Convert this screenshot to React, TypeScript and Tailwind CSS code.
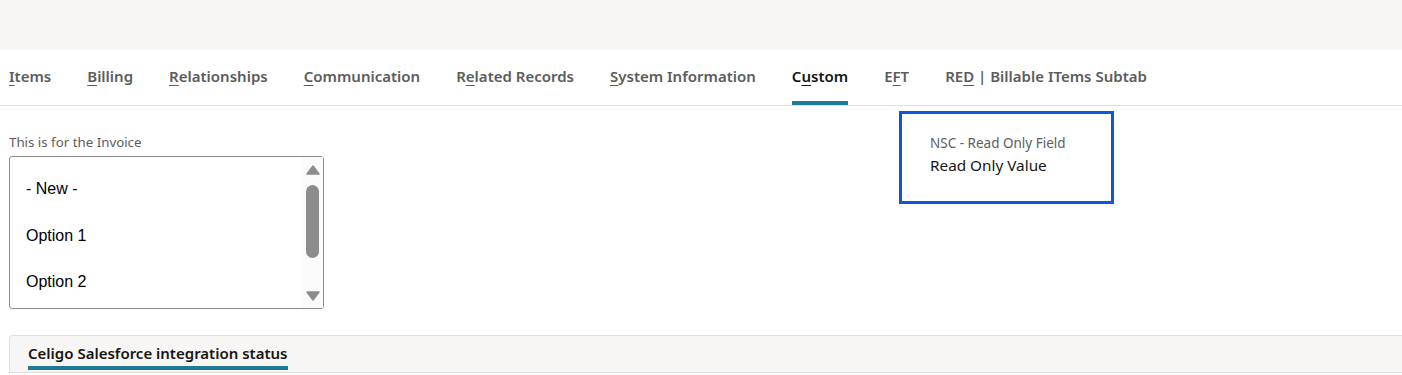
import React from "react";

const tabs: { pre: string; key: string; post: string; active?: boolean }[] = [
  { pre: "", key: "I", post: "tems" },
  { pre: "", key: "B", post: "illing" },
  { pre: "", key: "R", post: "elationships" },
  { pre: "", key: "C", post: "ommunication" },
  { pre: "R", key: "e", post: "lated Records" },
  { pre: "", key: "S", post: "ystem Information" },
  { pre: "C", key: "u", post: "stom", active: true },
  { pre: "E", key: "F", post: "T" },
  { pre: "RE", key: "D", post: " | Billable ITems Subtab" },
];

const font = { fontFamily: '"Noto Sans", Lato, sans-serif' };

function Listbox() {
  return (
    <div className="flex h-[153px] w-[315px] rounded-[3px] border border-[#8c8c8c] bg-white">
      <div className="flex flex-1 flex-col pl-4 pt-[20px] text-[16px] text-black [font-family:'Liberation_Sans',Arial,sans-serif]">
        <div className="h-[47px]">- New -</div>
        <div className="h-[46px]">Option 1</div>
        <div>Option 2</div>
      </div>
      <div className="flex w-[21px] flex-col items-center bg-[#fafafa] py-[6px]">
        <svg width="14" height="10" viewBox="0 0 14 10" className="mt-[2px]">
          <path d="M7 1 L13 9 L1 9 Z" fill="#8c8c8c" strokeLinejoin="round" stroke="#8c8c8c" strokeWidth="1.5" />
        </svg>
        <div className="mt-[10px] h-[73px] w-[13px] rounded-full bg-[#8c8c8c]" />
        <div className="flex-1" />
        <svg width="14" height="10" viewBox="0 0 14 10" className="mb-[1px]">
          <path d="M1 1 L13 1 L7 9 Z" fill="#8c8c8c" strokeLinejoin="round" stroke="#8c8c8c" strokeWidth="1.5" />
        </svg>
      </div>
    </div>
  );
}

export default function App() {
  return (
    <div className="h-[375px] w-[1402px] overflow-hidden bg-white" style={font}>
      <div className="h-[50px] bg-[#f7f6f4]" />

      <nav className="flex h-[56px] gap-[36px] border-b border-[#e0e0e0] pl-[9px]">
        {tabs.map((t) => (
          <div
            key={t.pre + t.key + t.post}
            className={`flex items-center border-b-[4px] pt-[1px] text-[15px] font-semibold whitespace-pre ${
              t.active ? "border-[#1f7a99] text-[#161513]" : "border-transparent text-[#5c5c5c]"
            }`}
          >
            <span>
              {t.pre}
              <span className="underline underline-offset-[3px]">{t.key}</span>
              {t.post}
            </span>
          </div>
        ))}
      </nav>

      <div className="flex h-[229px]">
        <div className="w-[899px] pl-[9px] pt-[28px]">
          <div className="mb-[6px] text-[13.3px] leading-[16px] text-[#5c5c5c]">This is for the Invoice</div>
          <Listbox />
        </div>
        <div className="pt-[5px]">
          <div className="h-[93px] w-[215px] border-[3px] border-[#0f55e0] pl-[28px] pt-[20px]">
            <div className="text-[13.5px] leading-[18px] text-[#5c5c5c]">NSC - Read Only Field</div>
            <div className="mt-[3px] text-[15.3px] leading-[20px] text-[#161513]">Read Only Value</div>
          </div>
        </div>
      </div>

      <div className="ml-[9px] h-[38px] rounded-tl-[4px] border-t border-l border-b border-[#dedede] bg-[#f7f6f4] pl-[18px]">
        <div className="inline-block border-b-[4px] border-[#1f7a99] pt-[7px] pb-[3px] text-[15px] leading-[20px] font-semibold text-[#161513]">
          Celigo Salesforce integration status
        </div>
      </div>
    </div>
  );
}
